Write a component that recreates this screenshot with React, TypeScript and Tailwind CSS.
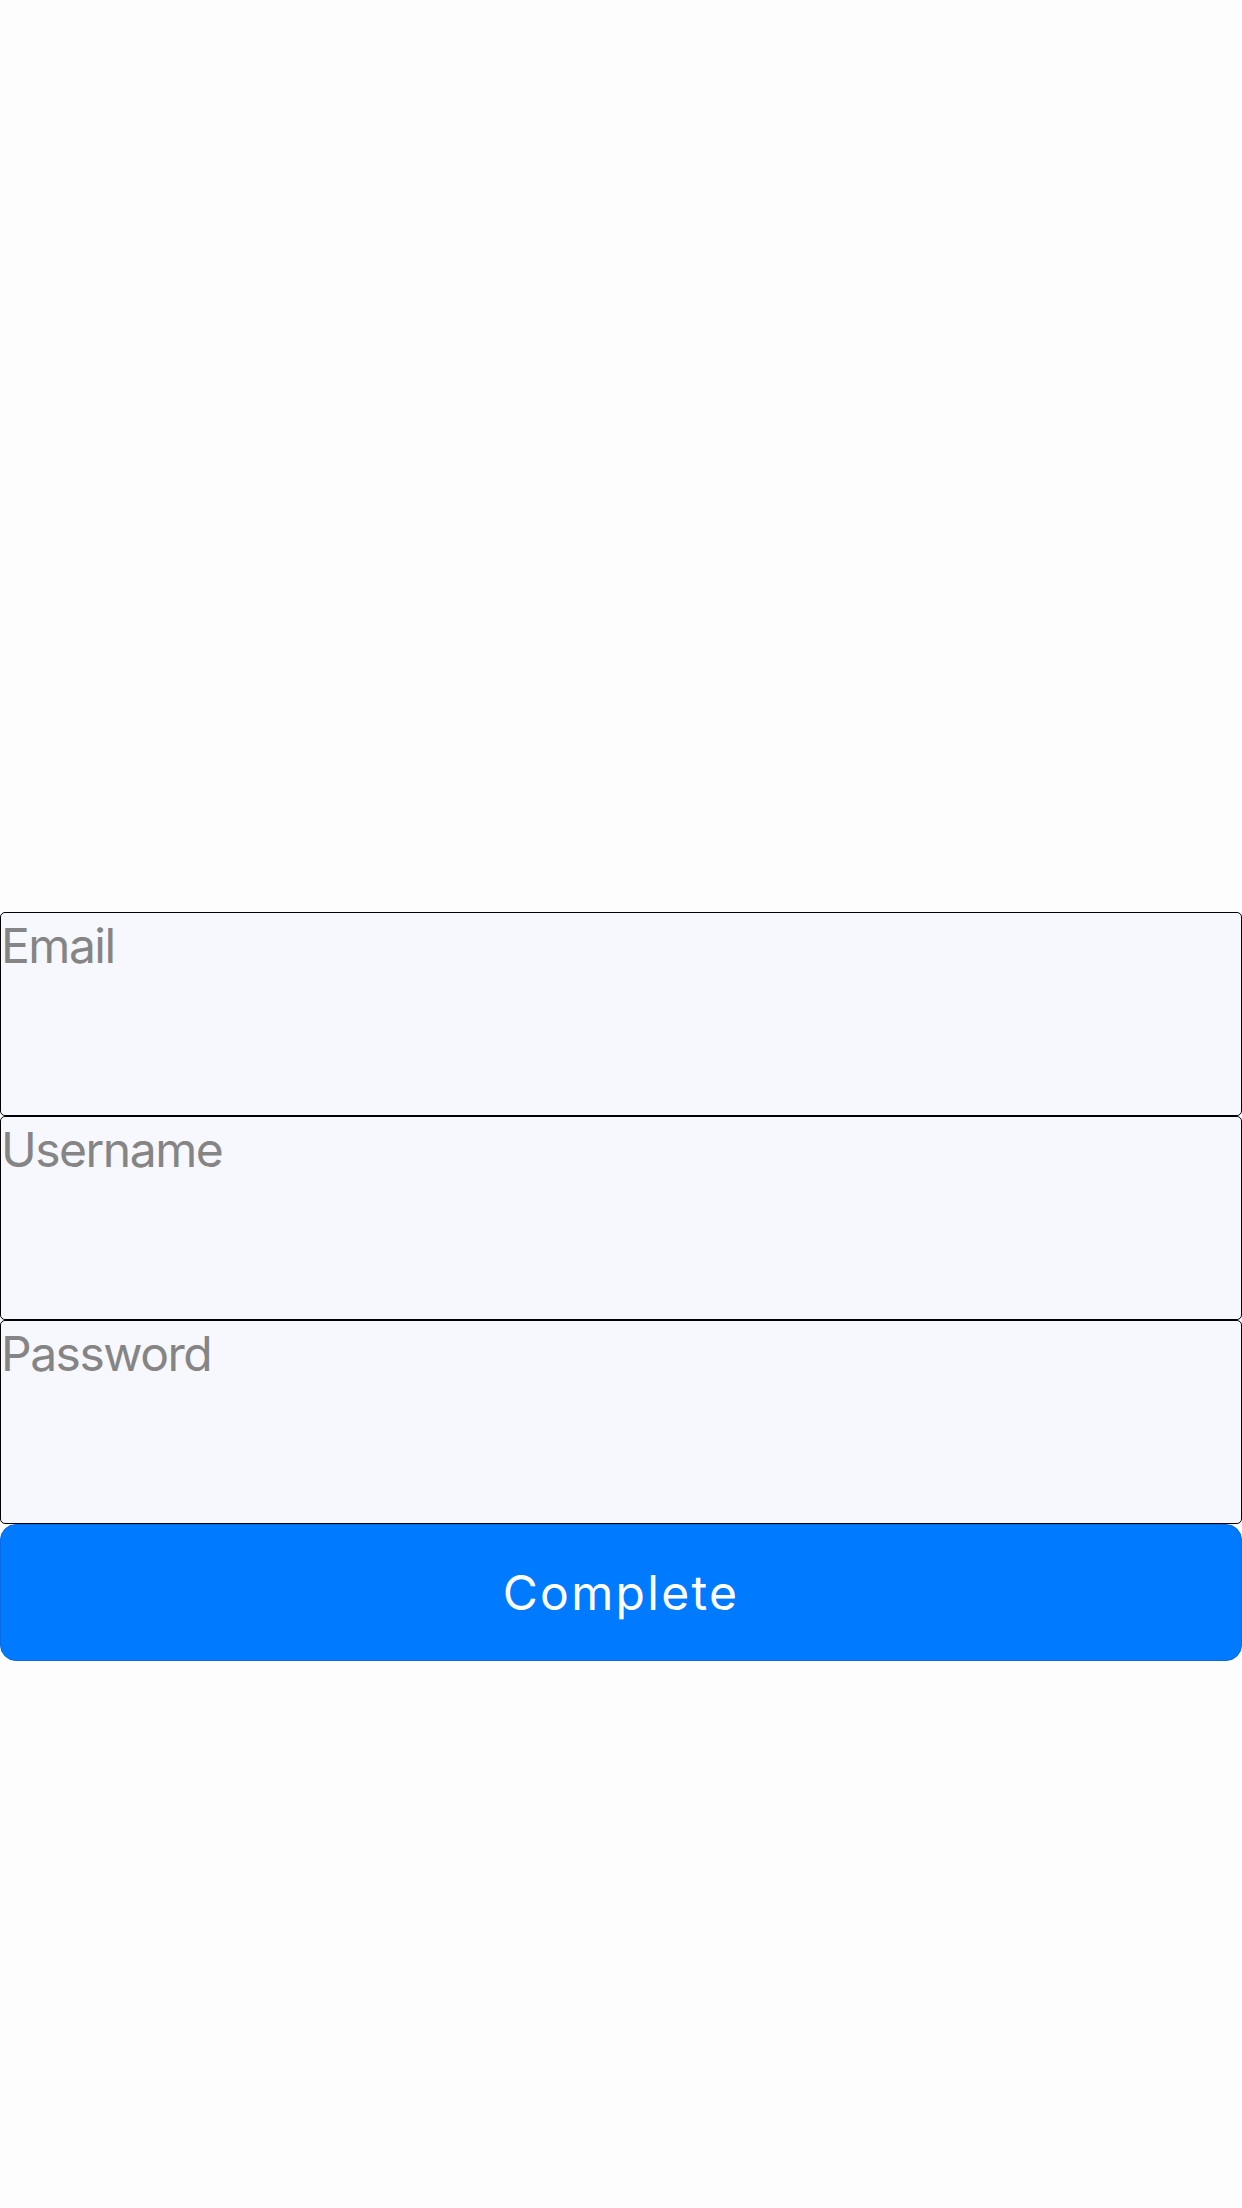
export default function App() {
  const fields = ['Email', 'Username', 'Password'];
  return (
    <div className="min-h-[2208px] w-full bg-[#fdfdfd] pt-[912px] font-['Inter',sans-serif]">
      <div className="flex flex-col">
        {fields.map((f) => (
          <div
            key={f}
            className="h-[204px] rounded-[5px] border border-black bg-[#f7f8fd] pt-[4px] text-[48px] leading-[58px] tracking-[-1.5px] text-[#858585]"
          >
            {f}
          </div>
        ))}
        <button className="flex h-[137px] items-center justify-center rounded-[16px] border border-[#0a6ae0] bg-[#007aff] text-[48px] tracking-[2.3px] text-white">
          Complete
        </button>
      </div>
    </div>
  );
}
